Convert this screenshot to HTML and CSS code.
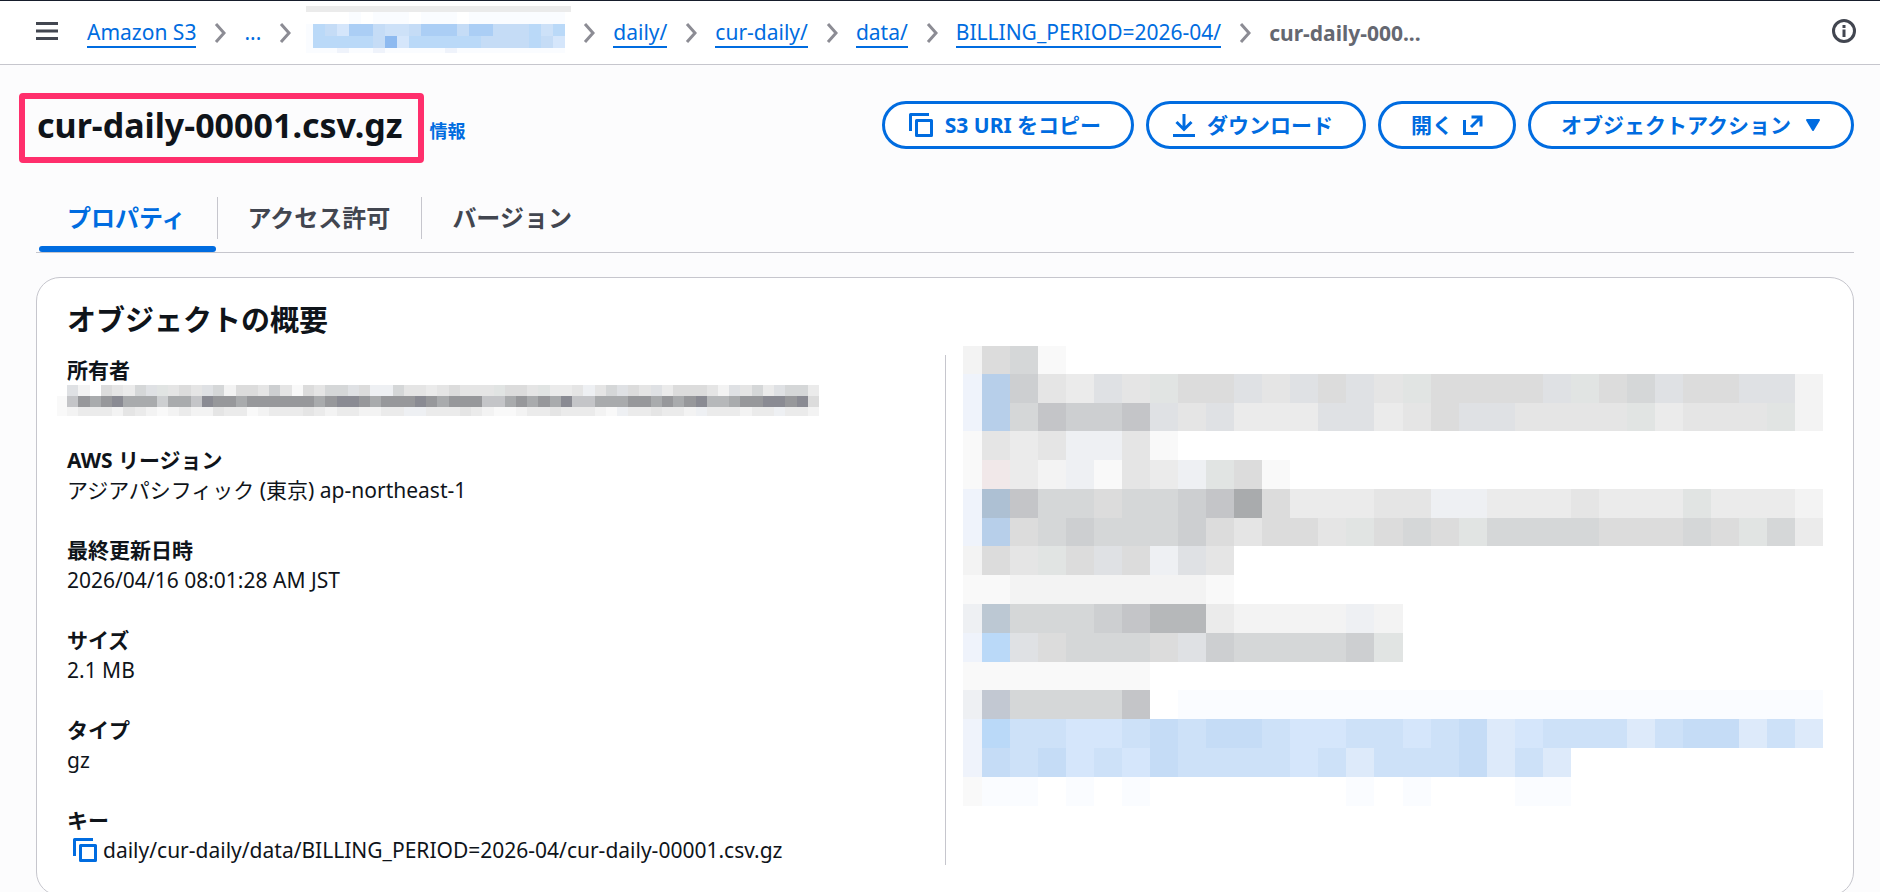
FILE: index.html
```html
<!DOCTYPE html>
<html lang="ja">
<head>
<meta charset="UTF-8">
<meta name="viewport" content="width=device-width, initial-scale=1.0">
<title>cur-daily-00001.csv.gz - Amazon S3</title>
<link rel="stylesheet" href="styles.css">
</head>
<body>
<svg class="defs" aria-hidden="true">
  <symbol id="chevron" viewBox="0 0 12 22"><path d="M2 2l8 9-8 9" fill="none" stroke="currentColor" stroke-width="3"/></symbol>
  <symbol id="copy" viewBox="0 0 24 24"><path d="M1.5 18V1.5H20M7.500 7.500h15v15h-15z" fill="none" stroke="currentColor" stroke-width="3" stroke-linejoin="round"/></symbol>
</svg>

<header class="topbar">
  <button class="icon-btn" aria-label="メニュー">
    <svg width="22" height="18" viewBox="0 0 22 18"><path d="M0 1.500h22M0 9h22M0 16.500h22" stroke="currentColor" stroke-width="3"/></svg>
  </button>
  <nav class="breadcrumb" aria-label="パンくずリスト">
    <a href="#">Amazon S3</a>
    <svg class="chevron"><use href="#chevron"/></svg>
    <a class="dots" href="#">...</a>
    <svg class="chevron"><use href="#chevron"/></svg>
    <svg class="mosaic-bucket" id="mosaic-bucket"></svg>
    <svg class="chevron"><use href="#chevron"/></svg>
    <a href="#">daily/</a>
    <svg class="chevron"><use href="#chevron"/></svg>
    <a href="#">cur-daily/</a>
    <svg class="chevron"><use href="#chevron"/></svg>
    <a href="#">data/</a>
    <svg class="chevron"><use href="#chevron"/></svg>
    <a href="#">BILLING_PERIOD=2026-04/</a>
    <svg class="chevron"><use href="#chevron"/></svg>
    <span class="current">cur-daily-000...</span>
  </nav>
  <button class="icon-btn info-btn" aria-label="情報パネル">
    <svg width="24" height="24" viewBox="0 0 24 24"><circle cx="12" cy="12" r="10.500" fill="none" stroke="currentColor" stroke-width="3"/><path d="M12 6v3M12 10.500v7.500" stroke="currentColor" stroke-width="3"/></svg>
  </button>
</header>

<main class="page">
  <div class="page-header">
    <div class="title">
      <h1>cur-daily-00001.csv.gz</h1>
      <a class="info" href="#">情報</a>
    </div>
    <div class="actions">
      <button class="btn btn-copy"><svg width="24" height="24"><use href="#copy"/></svg>S3 URI をコピー</button>
      <button class="btn btn-download"><svg width="22" height="24" viewBox="0 0 22 24"><path d="M11 1v15M3.500 9l7.500 7.500L18.500 9M0 22.500h22" fill="none" stroke="currentColor" stroke-width="3"/></svg>ダウンロード</button>
      <button class="btn btn-open">開く<svg width="20" height="20" viewBox="0 0 20 20"><path d="M8.500 2H18v9.500M18 2L8 12M1.500 5v13.500H15" fill="none" stroke="currentColor" stroke-width="3"/></svg></button>
      <button class="btn btn-menu">オブジェクトアクション<svg width="16" height="14" viewBox="0 0 16 14"><path d="M2 2h12L8 12z" fill="currentColor" stroke="currentColor" stroke-width="2" stroke-linejoin="round"/></svg></button>
    </div>
  </div>

  <div class="tabs" role="tablist">
    <button class="tab active" role="tab" aria-selected="true">プロパティ</button>
    <button class="tab" role="tab">アクセス許可</button>
    <button class="tab" role="tab">バージョン</button>
  </div>

  <section class="card">
    <h2>オブジェクトの概要</h2>
    <div class="columns">
      <dl class="details">
        <div>
          <dt>所有者</dt>
          <dd><svg class="mosaic-owner" id="mosaic-owner"></svg></dd>
        </div>
        <div>
          <dt>AWS リージョン</dt>
          <dd>アジアパシフィック (東京) ap-northeast-1</dd>
        </div>
        <div>
          <dt>最終更新日時</dt>
          <dd>2026/04/16 08:01:28 AM JST</dd>
        </div>
        <div>
          <dt>サイズ</dt>
          <dd>2.1 MB</dd>
        </div>
        <div>
          <dt>タイプ</dt>
          <dd>gz</dd>
        </div>
        <div>
          <dt>キー</dt>
          <dd class="key"><button class="copy-btn" aria-label="キーをコピー"><svg width="24" height="24"><use href="#copy"/></svg></button>daily/cur-daily/data/BILLING_PERIOD=2026-04/cur-daily-00001.csv.gz</dd>
        </div>
      </dl>
      <div class="right">
        <svg class="mosaic-details" id="mosaic-details"></svg>
      </div>
    </div>
  </section>
</main>
<script src="mosaic.js"></script>
</body>
</html>
```
FILE: styles.css
```css
* {
  box-sizing: border-box;
}
body {
  margin: 0;
  background: #fcfcfd;
  color: #0f141a;
  font-family: "Noto Sans", "Noto Sans CJK JP", sans-serif;
  font-size: 21px;
  line-height: 30px;
}
a {
  color: #006ce0;
}
button {
  font: inherit;
  color: inherit;
  background: none;
  border: none;
  padding: 0;
  cursor: pointer;
}
svg {
  display: block;
  flex: none;
}
.defs {
  display: none;
}

/* top bar */
.topbar {
  display: flex;
  align-items: center;
  height: 65px;
  padding: 0 24px 4px 36px;
  background: #fff;
  border-top: 1px solid #161d2b;
  border-bottom: 1px solid #c6c6cd;
}
.icon-btn {
  color: #424650;
}
.info-btn {
  margin-left: auto;
}
.breadcrumb {
  display: flex;
  align-items: center;
  gap: 18px;
  margin-left: 29px;
  height: 60px;
  padding-top: 5px;
}
.breadcrumb a {
  line-height: 27px;
  text-decoration: none;
  border-bottom: 2px solid #006ce0;
}
.breadcrumb .dots {
  border-color: transparent;
}
.breadcrumb .current {
  color: #656871;
  font-weight: 700;
}
.chevron {
  width: 12px;
  height: 22px;
  color: #8c8c94;
}
.mosaic-bucket {
  width: 265px;
  height: 47px;
  margin: 0 -6px 8px -3px;
  padding-right: 6px;
  border-top: 6px solid #ebebeb;
}

/* title and actions */
.page {
  padding: 28px 26px 30px 36px;
}
.page-header {
  display: flex;
  justify-content: space-between;
  align-items: flex-start;
}
.title {
  display: flex;
  align-items: baseline;
  gap: 5px;
  margin-left: -17px;
}
h1 {
  margin: 0;
  padding: 5px 16px 11px 12px;
  border: 6px solid #ff2f6c;
  border-radius: 4px;
  font-size: 34px;
  line-height: 42px;
}
.info {
  font-size: 18px;
  font-weight: 700;
  text-decoration: none;
}
.actions {
  display: flex;
  gap: 12px;
  padding-top: 8px;
}
.btn {
  display: flex;
  align-items: center;
  height: 48px;
  padding: 0 30px;
  border: 3px solid #006ce0;
  border-radius: 24px;
  background: #fff;
  color: #006ce0;
  font-weight: 700;
}
.btn-copy, .btn-download {
  gap: 12px;
  padding-left: 24px;
}
.btn-open {
  gap: 10px;
}
.btn-menu {
  gap: 14px;
}

/* tabs */
.tabs {
  display: flex;
  margin-top: 24px;
  border-bottom: 1px solid #c6c6cd;
}
.tab {
  position: relative;
  height: 65px;
  padding: 0 31px 4px;
  color: #424650;
  font-size: 24px;
  font-weight: 700;
}
.tab + .tab::before {
  content: "";
  position: absolute;
  left: 0;
  top: 10px;
  width: 1px;
  height: 42px;
  background: #c6c6cd;
}
.tab.active {
  color: #006ce0;
}
.tab.active::after {
  content: "";
  position: absolute;
  left: 3px;
  right: 1px;
  bottom: 0;
  height: 6px;
  border-radius: 3px;
  background: #006ce0;
}

/* overview card */
.card {
  margin-top: 24px;
  padding: 24px 30px 30px;
  border: 1px solid #c6c6cd;
  border-radius: 24px;
  background: #fff;
}
h2 {
  margin: 0 0 17px;
  font-size: 29px;
  line-height: 36px;
}
.columns {
  display: grid;
  grid-template-columns: 1fr 1fr;
}
.details {
  display: grid;
  gap: 30px;
  margin: 0;
}
dt {
  font-weight: 700;
}
dd {
  margin: 0;
  height: 30px;
}
.key {
  display: flex;
  gap: 6px;
}
.copy-btn {
  margin-left: 6px;
  color: #006ce0;
}
.right {
  border-left: 1px solid #c6c6cd;
  padding-left: 17px;
}
.mosaic-owner {
  width: 762px;
  height: 31px;
  margin-left: -10px;
}
.mosaic-details {
  width: 100%;
  height: 460px;
  margin-top: -9px;
}
```
FILE: mosaic.js
```js
// one letter per cell, "." leaves the cell empty
const palette = {
  a: '#f9f9f9', b: '#f3f3f3', c: '#ebebeb', d: '#e5e5e5', e: '#e1e4e3', f: '#dfe1e4',
  g: '#dcdcdc', h: '#d5d7d8', i: '#cdcfd1', j: '#c4c5c8', k: '#b6b8ba', l: '#a9abad',
  m: '#eef0f3', n: '#97989b', o: '#8a8b93', p: '#f1e8e9',
  A: '#eff3fb', B: '#b7cfea', C: '#bad9f8', D: '#c5dcf6', E: '#cde1f8', F: '#d5e6fb',
  G: '#ddeafa', H: '#adc0d3', I: '#bcc8d3', J: '#c2c8d2', K: '#fafcff', L: '#abcef5', M: '#8ebaf0'
};

function drawMosaic(id, firstWidth, cellWidth, edges, rows) {
  const svg = document.getElementById(id);
  const cols = Math.max(...rows.map(row => row.length));
  const width = firstWidth + (cols - 1) * cellWidth;
  svg.setAttribute('viewBox', `0 0 ${width} ${edges[edges.length - 1]}`);
  svg.setAttribute('preserveAspectRatio', 'none');
  svg.setAttribute('shape-rendering', 'crispEdges');
  rows.forEach((row, y) => {
    [...row].forEach((key, x) => {
      if (key === '.') return;
      const rect = document.createElementNS('http://www.w3.org/2000/svg', 'rect');
      rect.setAttribute('x', x === 0 ? 0 : firstWidth + (x - 1) * cellWidth);
      rect.setAttribute('y', edges[y]);
      rect.setAttribute('width', x === 0 ? firstWidth : cellWidth);
      rect.setAttribute('height', edges[y + 1] - edges[y]);
      rect.setAttribute('fill', palette[key]);
      svg.appendChild(rect);
    });
  });
}

drawMosaic('mosaic-bucket', 7, 12, [0, 12, 24, 36, 41], [
  '....K.KKK.KKK.KKKKKKKK',
  'KCDFLLDEEDLLLDLLDDDCEC',
  'KCCCCCDMFCCCCCCDDDDCDF',
  'KKKAKKAKKKKKAKKKKKKKKK'
]);

drawMosaic('mosaic-owner', 10, 11, [0, 11, 22, 31], [
  '.fb.gdchfedgdfhbggdidagdhhfgmmhddcdgdddeggdeccdmdhfgdfcgggdbfdhcfhhc',
  'ajnlnolllilljonnlnnnnnnlnoonlnnnonlnnnjjlnlnlojjlllnnlnlnokklnnoonog',
  'abcccbdcbabcbbdccabcccdcbccbbccmmcccdcbaabccdcccbamccdccbmcccbccmccb'
]);

drawMosaic('mosaic-details', 19, 28, [0, 28, 57, 85, 114, 143, 172, 200, 229, 258, 287, 316, 344, 373, 402, 431, 460], [
  'bgha...........................',
  'ABidcfdeggfdfgfdeggggfeghfggffb',
  'ABhjiijfdfcccffcdgffddddecdddeb',
  'adcdmmda.......................',
  'apcbmadcmega...................',
  'AHjhhghhijlgcccddmmcccdcccecccb',
  'ABghihhhigdggdeghgehhhhggghgehc',
  'bgdegfgmfd.....................',
  'aabbbbbbba.....................',
  'mIhhhijkkcbbbbmb...............',
  'ACfghhhgfihhhhie...............',
  'aaaaaaa........................',
  'mJhhhhj.KKKKKKKKKKKKKKKKKKKKKKK',
  'ACEEFFEDEDDEFFEEFEDGFEEEGEDDGEG',
  'ADEDFEFDEEEEFEGEEEDGEG.........',
  'aKK.K.K.......K.K...KK.........'
]);
```
